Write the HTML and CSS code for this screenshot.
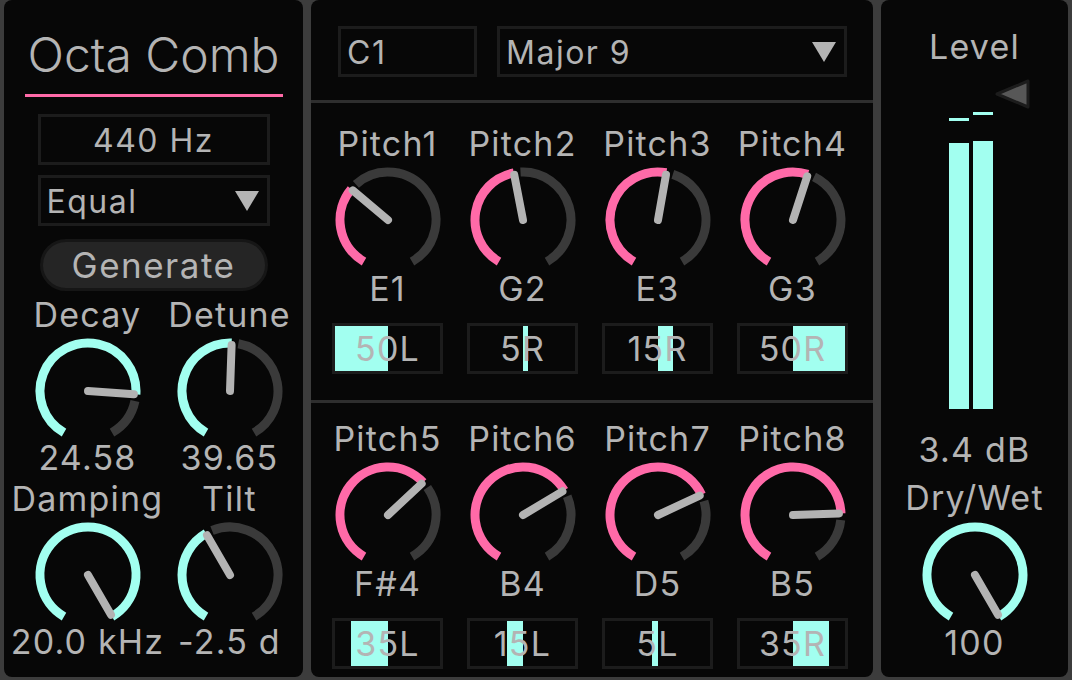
FILE: index.html
```html
<!DOCTYPE html>
<html lang="en">
<head>
    <meta charset="UTF-8">
    <meta name="viewport" content="width=device-width, initial-scale=1.0">
    <title>Octa Comb</title>
    <link rel="stylesheet" href="styles.css">
</head>
<body>
<div class="device">
    <section class="panel panel-main">
        <h1 class="title">Octa Comb</h1>
        <div class="field field-center">440 Hz</div>
        <div class="field field-menu">Equal<span class="arrow"></span></div>
        <button class="generate">Generate</button>
        <div class="knob-grid">
            <div class="knob-cell">
                <span class="label">Decay</span>
                <svg class="knob" data-angle="94" data-color="cyan"></svg>
                <span class="label value">24.58</span>
            </div>
            <div class="knob-cell">
                <span class="label">Detune</span>
                <svg class="knob" data-angle="2" data-color="cyan"></svg>
                <span class="label value">39.65</span>
            </div>
            <div class="knob-cell">
                <span class="label">Damping</span>
                <svg class="knob" data-angle="150" data-color="cyan"></svg>
                <span class="label value">20.0 kHz</span>
            </div>
            <div class="knob-cell">
                <span class="label">Tilt</span>
                <svg class="knob" data-angle="-30" data-color="cyan"></svg>
                <span class="label value">-2.5 d</span>
            </div>
        </div>
    </section>

    <section class="panel panel-pitch">
        <div class="pitch-head">
            <div class="field root">C1</div>
            <div class="field field-menu chord">Major 9<span class="arrow"></span></div>
        </div>
        <div class="pitch-row first">
            <div class="pitch">
                <span class="label">Pitch1</span>
                <svg class="knob" data-angle="-50" data-color="pink"></svg>
                <span class="label note">E1</span>
                <div class="pan"><span class="pan-bar" style="left: 0%; width: 50%"></span><span class="pan-text">50L</span></div>
            </div>
            <div class="pitch">
                <span class="label">Pitch2</span>
                <svg class="knob" data-angle="-11" data-color="pink"></svg>
                <span class="label note">G2</span>
                <div class="pan"><span class="pan-bar" style="left: 50%; width: 5%"></span><span class="pan-text">5R</span></div>
            </div>
            <div class="pitch">
                <span class="label">Pitch3</span>
                <svg class="knob" data-angle="10" data-color="pink"></svg>
                <span class="label note">E3</span>
                <div class="pan"><span class="pan-bar" style="left: 50%; width: 15%"></span><span class="pan-text">15R</span></div>
            </div>
            <div class="pitch">
                <span class="label">Pitch4</span>
                <svg class="knob" data-angle="18" data-color="pink"></svg>
                <span class="label note">G3</span>
                <div class="pan"><span class="pan-bar" style="left: 50%; width: 50%"></span><span class="pan-text">50R</span></div>
            </div>
        </div>
        <div class="pitch-row">
            <div class="pitch">
                <span class="label">Pitch5</span>
                <svg class="knob" data-angle="47" data-color="pink"></svg>
                <span class="label note">F#4</span>
                <div class="pan"><span class="pan-bar" style="left: 15%; width: 35%"></span><span class="pan-text">35L</span></div>
            </div>
            <div class="pitch">
                <span class="label">Pitch6</span>
                <svg class="knob" data-angle="59" data-color="pink"></svg>
                <span class="label note">B4</span>
                <div class="pan"><span class="pan-bar" style="left: 35%; width: 15%"></span><span class="pan-text">15L</span></div>
            </div>
            <div class="pitch">
                <span class="label">Pitch7</span>
                <svg class="knob" data-angle="65" data-color="pink"></svg>
                <span class="label note">D5</span>
                <div class="pan"><span class="pan-bar" style="left: 45%; width: 5%"></span><span class="pan-text">5L</span></div>
            </div>
            <div class="pitch">
                <span class="label">Pitch8</span>
                <svg class="knob" data-angle="88" data-color="pink"></svg>
                <span class="label note">B5</span>
                <div class="pan"><span class="pan-bar" style="left: 50%; width: 35%"></span><span class="pan-text">35R</span></div>
            </div>
        </div>
    </section>

    <section class="panel panel-out">
        <span class="label">Level</span>
        <div class="meter">
            <div class="meter-channel">
                <span class="peak"></span>
                <span class="bar" style="height: 266px"></span>
            </div>
            <div class="meter-channel">
                <span class="peak"></span>
                <span class="bar" style="height: 268px"></span>
            </div>
            <svg class="gain-arrow" width="36" height="32" viewBox="0 0 36 32">
                <polygon points="2,16 33,3 33,29" fill="#575757" stroke="#1c1c1c" stroke-width="3" stroke-linejoin="round"/>
            </svg>
        </div>
        <span class="label level-value">3.4 dB</span>
        <span class="label mix-label">Dry/Wet</span>
        <svg class="knob" data-angle="150" data-color="cyan"></svg>
        <span class="label value">100</span>
    </section>
</div>
<script src="knobs.js"></script>
</body>
</html>
```

FILE: styles.css
```css
*, *:before, *:after {
    box-sizing: border-box;
}

body {
    margin: 0;
    background-color: #3c3c3c;
    font-family: Inter, "Noto Sans", sans-serif;
    color: #b4b4b4;
    overflow: hidden;
}

.device {
    display: flex;
    gap: 8px;
    height: 680px;
    padding: 0 4px 3px;
}

.panel {
    background-color: #070707;
    border-radius: 8px;
}

.label {
    display: block;
    font-size: 34px;
    line-height: 32px;
    letter-spacing: 1.2px;
    text-align: center;
    white-space: nowrap;
}

.knob {
    display: block;
    width: 110px;
    height: 110px;
}

/* left panel */

.panel-main {
    width: 299px;
    display: flex;
    flex-direction: column;
    align-items: center;
}

.title {
    width: 258px;
    margin: 30px 0 0;
    padding-bottom: 14px;
    border-bottom: 3px solid #ff6aa8;
    font-size: 48px;
    font-weight: 300;
    line-height: 50px;
    text-align: center;
}

.field {
    height: 51px;
    border: 3px solid #1c1c1c;
    font-size: 32px;
    line-height: 45px;
    letter-spacing: 1.5px;
    padding-top: 1px;
}

.panel-main .field {
    width: 232px;
}

.field-center {
    margin-top: 17px;
    text-align: center;
}

.field-menu {
    display: flex;
    justify-content: space-between;
    align-items: center;
    padding: 1px 8px 0 6px;
}

.panel-main .field-menu {
    margin-top: 10px;
}

.arrow {
    width: 0;
    height: 0;
    border-left: 12px solid transparent;
    border-right: 12px solid transparent;
    border-top: 20px solid #b4b4b4;
}

.generate {
    width: 228px;
    height: 52px;
    margin-top: 13px;
    border: 3px solid #161616;
    border-radius: 26px;
    background-color: #252525;
    color: #b4b4b4;
    font-family: inherit;
    font-size: 35px;
    letter-spacing: 1.5px;
    line-height: 44px;
    padding: 0;
}

.knob-grid {
    display: grid;
    grid-template-columns: 142px 142px;
    row-gap: 9px;
    margin: 8px 0 0 10px;
}

.knob-cell {
    display: flex;
    flex-direction: column;
    align-items: center;
}

.knob-cell .knob {
    margin-top: 5px;
}

.value {
    margin-top: -4px;
}

/* pitch panel */

.panel-pitch {
    width: 562px;
}

.pitch-head {
    display: flex;
    gap: 20px;
    padding: 26px 26px 23px 27px;
    border-bottom: 3px solid #2e2e2e;
}

.pitch-head .field {
    padding-left: 6px;
}

.root {
    width: 139px;
}

.chord {
    flex: 1;
}

.pitch-row {
    display: grid;
    grid-template-columns: repeat(4, 135px);
    padding: 20px 0 0 9px;
}

.pitch-row.first {
    padding-top: 25px;
    padding-bottom: 26px;
    border-bottom: 3px solid #2e2e2e;
}

.pitch {
    display: flex;
    flex-direction: column;
    align-items: center;
}

.pitch .knob {
    margin-top: 5px;
}

.note {
    margin-top: -2px;
}

.pan {
    position: relative;
    width: 111px;
    height: 51px;
    margin-top: 18px;
    border: 3px solid #1c1c1c;
}

.pan-bar {
    position: absolute;
    top: 0;
    bottom: 0;
    background-color: #a2fff0;
}

.pan-text {
    position: relative;
    display: block;
    font-size: 34px;
    line-height: 45px;
    letter-spacing: 1.2px;
    text-align: center;
}

/* output panel */

.panel-out {
    width: 187px;
    display: flex;
    flex-direction: column;
    align-items: center;
    padding-top: 31px;
}

.meter {
    position: relative;
    display: flex;
    gap: 4px;
    height: 346px;
    margin-right: 7px;
}

.meter-channel {
    display: flex;
    flex-direction: column;
    justify-content: flex-end;
    width: 20px;
}

.peak {
    height: 3px;
    background-color: #a2fff0;
    margin-bottom: 22px;
}

.meter-channel + .meter-channel .peak {
    margin-bottom: 26px;
}

.bar {
    background-color: #a2fff0;
}

.gain-arrow {
    position: absolute;
    left: 46px;
    top: 15px;
}

.level-value {
    margin-top: 25px;
}

.mix-label {
    margin-top: 16px;
}

.panel-out .knob {
    margin-top: 6px;
}

.panel-out .value {
    margin-top: -3px;
}
```

FILE: knobs.js
```js
// ring knobs: dark track, coloured value arc and a grey needle
const SVG_NS = 'http://www.w3.org/2000/svg'
const KNOB_COLORS = {pink: '#ff6aa8', cyan: '#a2fff0'}

function polar(angle, r) {
    const rad = angle * Math.PI / 180
    return [55 + r * Math.sin(rad), 55 - r * Math.cos(rad)]
}

function arcPath(from, to, r) {
    const [x1, y1] = polar(from, r)
    const [x2, y2] = polar(to, r)
    const large = to - from > 180 ? 1 : 0
    return `M ${x1} ${y1} A ${r} ${r} 0 ${large} 1 ${x2} ${y2}`
}

function addEl(parent, name, attrs) {
    const el = document.createElementNS(SVG_NS, name)
    Object.keys(attrs).forEach(key => el.setAttribute(key, attrs[key]))
    parent.appendChild(el)
    return el
}

document.querySelectorAll('.knob').forEach(knob => {
    const angle = parseFloat(knob.dataset.angle)
    knob.setAttribute('viewBox', '0 0 110 110')

    if (angle + 8 < 150) {
        addEl(knob, 'path', {
            d: arcPath(angle + 8, 150, 48),
            fill: 'none', stroke: '#3a3a3a', 'stroke-width': 9
        })
    }
    addEl(knob, 'path', {
        d: arcPath(-150, Math.min(angle, 150), 48),
        fill: 'none', stroke: KNOB_COLORS[knob.dataset.color], 'stroke-width': 9
    })

    const [nx, ny] = polar(angle, 46)
    addEl(knob, 'line', {
        x1: 55, y1: 55, x2: nx, y2: ny,
        stroke: '#b3b3b3', 'stroke-width': 8, 'stroke-linecap': 'round'
    })
})
```
